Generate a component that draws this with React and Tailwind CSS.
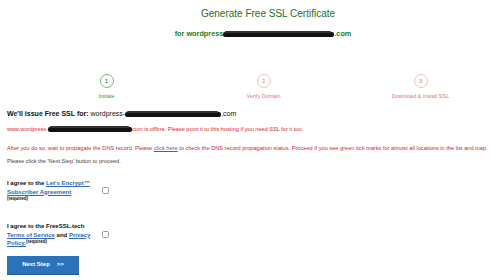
import React from "react";

function Scribble({ w }) {
  return (
    <span className="relative inline-block align-middle h-[5px]" style={{ width: w }}>
      <span className="absolute left-0 right-0 top-[0px] h-[5px] rounded-[2px] bg-[#111]" />
      <span className="absolute left-[2px] right-[3px] top-[-1px] h-[2px] rounded-full bg-[#333]" />
    </span>
  );
}

function Step({ n, label, active }) {
  return (
    <div className="flex flex-col items-center">
      <div
        className={
          active
            ? "w-[14px] h-[14px] rounded-full border border-[#6cbf6c] flex items-center justify-center text-[5.5px] text-[#333]"
            : "w-[14px] h-[14px] rounded-full border border-[#efc3c3] flex items-center justify-center text-[5.5px] text-[#c77]"
        }
      >
        {n}
      </div>
      <div
        className={
          active
            ? "mt-[5px] text-[5.5px] leading-[7px] text-[#3c9a3c]"
            : "mt-[5px] text-[5.5px] leading-[7px] text-[#d77b7b]"
        }
      >
        {label}
      </div>
    </div>
  );
}

export default function App() {
  return (
    <div className="w-[500px] h-[280px] bg-white overflow-hidden font-['Liberation_Sans',Arial,sans-serif]">
      <div className="pt-[8px] pl-[36px] text-center text-[10px] leading-[12px] text-[#1f6e23]">
        Generate Free SSL Certificate
      </div>
      <div className="mt-[9px] pl-[26px] text-center text-[7.3px] leading-[10px] font-bold text-[#237a26]">
        for wordpress<Scribble w={111} />.com
      </div>

      <div className="mt-[35px] ml-[28px] w-[471px] grid grid-cols-3">
        <Step n="1" label="Initiate" active />
        <Step n="2" label="Verify Domain" />
        <Step n="3" label="Download & Install SSL" />
      </div>

      <div className="px-[7px]">
        <div className="mt-[9px] text-[7px] leading-[9px] text-[#111]">
          <span className="font-bold">We'll issue Free SSL for:</span> wordpress-<Scribble w={96} />.com
        </div>
        <div className="mt-[8px] text-[5.6px] leading-[7px] text-[#d9262e]">
          www.wordpress-<Scribble w={84} />com is offline. Please point it to this hosting if you need SSL for it too.
        </div>
        <div className="mt-[12px] text-[5.65px] leading-[7px] text-[#d9262e] whitespace-nowrap">
          After you do so, wait to propagate the DNS record. Please{" "}
          <span className="text-[#2a6db5] underline">click here</span> to check the DNS record propagation status.
          Proceed if you see green tick marks for almost all locations in the list and map.
        </div>
        <div className="mt-[6px] text-[5.6px] leading-[7px] text-[#444]">
          Please click the 'Next Step' button to proceed.
        </div>

        <div className="mt-[14px] flex items-center">
          <div className="w-[95px] text-[6px] leading-[8.5px] font-bold text-[#111]">
            <div>
              I agree to the <span className="text-[#2a6db5] underline">Let's Encrypt™</span>
            </div>
            <div>
              <span className="text-[#2a6db5] underline">Subscriber Agreement</span>
            </div>
            <div className="text-[4.5px] leading-[6px]">(required)</div>
          </div>
          <div className="w-[7px] h-[7px] rounded-[1.5px] border border-[#999] bg-white" />
        </div>

        <div className="mt-[20px] flex items-center">
          <div className="w-[95px] text-[6px] leading-[8.5px] font-bold text-[#111]">
            <div>I agree to the FreeSSL.tech</div>
            <div>
              <span className="text-[#2a6db5] underline">Terms of Service</span> and{" "}
              <span className="text-[#2a6db5] underline">Privacy</span>
            </div>
            <div className="flex items-start">
              <span className="text-[#2a6db5] underline">Policy.</span>
              <span className="text-[4.5px] leading-[5px]">(required)</span>
            </div>
          </div>
          <div className="w-[7px] h-[7px] rounded-[1.5px] border border-[#999] bg-white" />
        </div>

        <button className="mt-[8px] w-[72px] h-[19px] bg-[#2b73b9] text-white text-[6px] font-bold flex items-center justify-center gap-[7px] border-b border-[#1f5a93]">
          <span>Next Step</span>
          <span>&gt;&gt;</span>
        </button>
      </div>
    </div>
  );
}
